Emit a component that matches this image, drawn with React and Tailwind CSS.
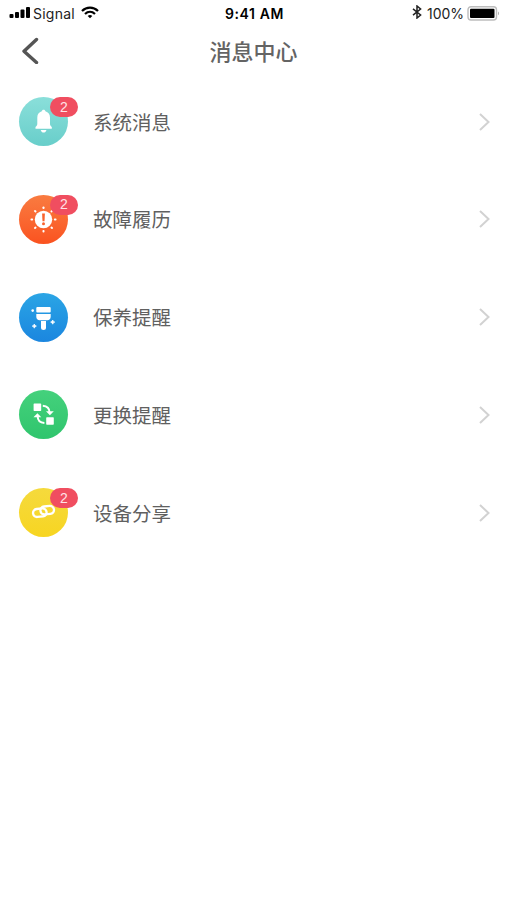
const BellIcon = () => (
  <>
    <path d="M24.6 12.8c-1 0-1.7.6-1.8 1.5-2.9.9-4.5 3.2-4.5 6.2v6.3c0 1.3-.6 2.2-1.8 3.1v1.9h16.3v-1.9c-1.2-.9-1.8-1.8-1.8-3.1v-6.3c0-3-1.7-5.3-4.6-6.2-.1-.9-.8-1.5-1.8-1.5z" />
    <path d="M21.7 33h5.8c-.5 1.7-1.6 2.6-2.9 2.6s-2.4-.9-2.9-2.6z" />
  </>
);

const WARNING_RAYS = [0, 45, 90, 135, 180, 225, 270, 315];

const WarningIcon = () => (
  <>
    <circle cx="24.5" cy="24.5" r="8.7" />
    {WARNING_RAYS.map((angle) => (
      <rect key={angle} x="23.5" y="11.5" width="2" height="2.6" rx="0.8" transform={`rotate(${angle} 24.5 24.5)`} />
    ))}
    <path d="M23.1 18.6h2.8l-.4 7.6h-2z" fill="#f9622d" />
    <circle cx="24.5" cy="28.7" r="1.5" fill="#f9622d" />
  </>
);

const BrushIcon = () => (
  <>
    <rect x="17.3" y="14" width="14.4" height="5.6" rx="1" />
    <path d="M17.3 21h14.4v2.7c0 2-1.4 3.5-3.4 3.500h-7.600c-2 0-3.400-1.500-3.400-3.500z" />
    <path d="M22 28h5v6.500a2.5 2.5 0 0 1-5 0z" />
    <circle cx="13.7" cy="17.6" r="1.3" />
    <path d="M15.3 31l.7 1.4 1.4.7-1.4.7-.7 1.4-.7-1.4-1.4-.7 1.4-.7z" stroke="#fff" strokeWidth="0.7" />
    <path d="M33.7 27l.7 1.4 1.4.7-1.4.7-.7 1.4-.7-1.4-1.4-.7 1.4-.7z" stroke="#fff" strokeWidth="0.7" />
  </>
);

const ReplaceIcon = () => (
  <>
    <rect x="14.6" y="13.4" width="7.6" height="7.6" rx="0.7" />
    <rect x="27.2" y="27.2" width="7.6" height="7.6" rx="0.7" />
    <g fill="none" stroke="#fff" strokeWidth="2">
      <path d="M23.8 15.7c4 .2 6.700 2.800 6.800 7" />
      <path d="M25.400 33c-4-.2-6.700-2.800-6.800-7" />
    </g>
    <path d="M27 21.2l3.9 4 3.9-4z" />
    <path d="M22.3 27.3l-3.9-4-3.9 4z" />
  </>
);

const LinkIcon = () => (
  <g fill="none" stroke="#fff" strokeWidth="2.3">
    <rect x="14" y="20.7" width="13.600" height="8" rx="4" transform="rotate(-6 20.8 24.7)" />
    <rect x="21.400" y="18.200" width="13.600" height="8" rx="4" transform="rotate(-6 28.2 22.2)" />
  </g>
);

const messages = [
  { title: '系统消息', count: 2, Icon: BellIcon, color: 'from-[#8adfda] to-[#68ceca]' },
  { title: '故障履历', count: 2, Icon: WarningIcon, color: 'from-[#f97b40] to-[#fa521f]' },
  { title: '保养提醒', count: 0, Icon: BrushIcon, color: 'from-[#2ba5e5] to-[#1b86df]' },
  { title: '更换提醒', count: 0, Icon: ReplaceIcon, color: 'from-[#44d17c] to-[#2fc56d]' },
  { title: '设备分享', count: 2, Icon: LinkIcon, color: 'from-[#f5da3c] to-[#f7d520]' },
];

function StatusBar() {
  return (
    <div className="grid h-[27px] grid-cols-3 items-center pl-[9px] pr-[7px] font-[Inter,'Liberation_Sans',sans-serif] text-[14px] text-[#222]">
      <div className="flex items-center">
        <svg className="mb-[2px] h-[11px] w-[22px]" viewBox="0 0 22 11" fill="#000">
          <rect x="0.5" y="7" width="4" height="4" rx="1" />
          <rect x="6" y="5" width="4" height="6" rx="1" />
          <rect x="11.5" y="2.5" width="4" height="8.5" rx="1" />
          <rect x="17" y="0" width="4" height="11" rx="1" />
        </svg>
        <span className="ml-[2px] w-[43px] tracking-[0.25px]">Signal</span>
        <svg className="mb-[3px] ml-[5px] h-[13px] w-[18px]" viewBox="0 0 18 13" fill="none" stroke="#000" strokeWidth="2.2">
          <path d="M1 5c4.6-4.6 11.4-4.6 16 0" />
          <path d="M4 8c3-2.9 7-2.9 10 0" />
          <path d="M6.7 9.9c1.4-1.2 3.2-1.2 4.6 0L9 12.2z" fill="#000" stroke="none" />
        </svg>
      </div>
      <span className="whitespace-nowrap text-center font-semibold tracking-[0.6px] text-black">9:41 AM</span>
      <div className="flex items-center justify-end">
        <svg className="mb-[3px] h-[14px] w-[10px]" viewBox="0 0 10 14" fill="none" stroke="#222" strokeWidth="1.5">
          <path d="M1 3.8l7.6 6.2L5 13V1l3.6 3L1 10.2" />
        </svg>
        <span className="ml-[5px] w-[37px] whitespace-nowrap">100%</span>
        <svg className="ml-[3px] h-[15px] w-[33px]" viewBox="0 0 33 15">
          <rect x="1" y="0.7" width="28.5" height="13.3" rx="3" fill="#fff" stroke="#bdbdbd" strokeWidth="1.4" />
          <rect x="3" y="2.7" width="24.5" height="9.3" rx="1" fill="#000" />
          <path d="M31 5.5c1.3.4 1.3 3.3 0 3.8z" fill="#aaa" />
        </svg>
      </div>
    </div>
  );
}

function MessageRow({ title, count, Icon, color }) {
  return (
    <li className="flex h-[97.75px] items-center pl-[19px] pr-[15px]">
      <div className={`relative size-[49px] shrink-0 rounded-full bg-linear-to-b ${color}`}>
        <svg className="size-[49px]" viewBox="0 0 49 49" fill="#fff">
          <Icon />
        </svg>
        {count > 0 && (
          <span className="absolute left-[31px] top-0 flex h-5 w-7 items-center justify-center rounded-full bg-[#f04e60] font-['Liberation_Sans',sans-serif] text-[14px] text-[#ffe3e6]">
            {count}
          </span>
        )}
      </div>
      <span className="ml-[25px] flex-1 text-[19.5px] leading-7 text-[#606060]">{title}</span>
      <svg className="h-5 w-3.5 shrink-0" viewBox="0 0 14 20" fill="none" stroke="#d2d2d2" strokeWidth="2">
        <path d="M2 2l8.5 8L2 18" />
      </svg>
    </li>
  );
}

export default function App() {
  return (
    <div className="min-h-[900px] w-full bg-white font-['Noto_Sans_CJK_SC',sans-serif]">
      <StatusBar />
      <header className="grid h-[45.75px] grid-cols-[60px_1fr_60px] items-center">
        <button type="button" aria-label="返回" className="pl-[20px] pt-px">
          <svg className="h-[28px] w-[20px]" viewBox="0 0 20 28" fill="none" stroke="#555" strokeWidth="3.4" strokeLinecap="round" strokeLinejoin="round">
            <path d="M16.5 3.500L4 15.200l12.500 11.300" />
          </svg>
        </button>
        <h1 className="pt-px text-center text-[22px] font-medium leading-8 text-[#646464]">消息中心</h1>
      </header>
      <ul>
        {messages.map((item) => (
          <MessageRow key={item.title} {...item} />
        ))}
      </ul>
    </div>
  );
}
